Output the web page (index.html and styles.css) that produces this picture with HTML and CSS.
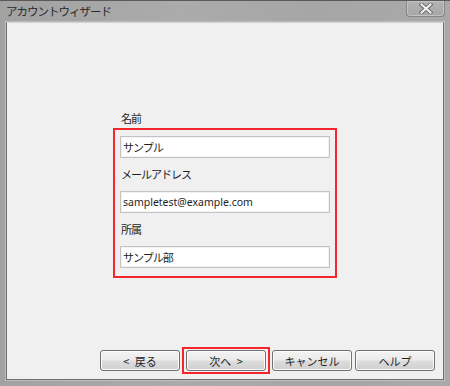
FILE: index.html
```html
<!DOCTYPE html>
<html>
<head>
  <meta charset="utf-8">
  <title>アカウントウィザード</title>
  <link rel="stylesheet" href="styles.css">
</head>
<body>
  <div class="window">
    <div class="titlebar">
      <span class="titlebar_text">アカウントウィザード</span>
      <span class="close-btn">
        <svg width="14" height="11" viewBox="0 0 14 11">
          <path d="M2.5 1.5 L11.5 9.5 M11.5 1.5 L2.5 9.5" stroke="#6b6b6b" stroke-width="4" stroke-linecap="square"/>
          <path d="M2.5 1.5 L11.5 9.5 M11.5 1.5 L2.5 9.5" stroke="#f4f4f4" stroke-width="2" stroke-linecap="square"/>
        </svg>
      </span>
    </div>
    <div class="client">
      <div class="form">
        <div class="label label-first">名前</div>
        <div class="field-box">
          <input class="field" type="text" value="サンプル">
          <div class="label">メールアドレス</div>
          <input class="field field-latin" type="text" value="sampletest@example.com">
          <div class="label">所属</div>
          <input class="field" type="text" value="サンプル部">
        </div>
      </div>
      <div class="buttons">
        <button class="btn">&lt; 戻る</button>
        <span class="btn-mark"><button class="btn">次へ &gt;</button></span>
        <button class="btn btn-cancel">キャンセル</button>
        <button class="btn btn-help">ヘルプ</button>
      </div>
    </div>
  </div>
</body>
</html>
```

FILE: styles.css
```css
html,
body {
  margin: 0;
  height: 100%;
  font-family: "Noto Sans CJK JP", "Noto Sans", sans-serif;
  font-size: 11px;
  color: #1e1e1e;
}

.window {
  height: 386px;
  display: flex;
  flex-direction: column;
  box-sizing: border-box;
  border-top: 1px solid #5a5a5a;
  background: linear-gradient(to right, #a2a2a2, #ababab 40%, #a6a6a6 70%, #a9a9a9);
}

.titlebar {
  height: 21px;
  display: flex;
  align-items: flex-start;
  justify-content: space-between;
}

.titlebar_text {
  padding: 2px 0 0 6px;
  font-size: 11.5px;
  letter-spacing: -1px;
  color: #2a2a2a;
  line-height: 17px;
}

.close-btn {
  width: 37px;
  height: 15px;
  margin-right: 5px;
  display: flex;
  align-items: center;
  justify-content: center;
  border: 1px solid #868686;
  border-top: none;
  border-radius: 0 0 4px 4px;
  background: linear-gradient(to bottom, #b4b4b4, #a6a6a6);
  box-shadow: inset 0 0 0 1px #c2c2c2;
}

.client {
  flex: 1;
  margin: 0 6px 6px 6px;
  display: flex;
  flex-direction: column;
  background: #f0f0f0;
  border: 1px solid #6f6f6f;
  border-top-color: #d0d0d0;
  box-shadow: 0 0 0 1px #bdbdbd;
}

.form {
  padding-top: 85px;
  display: flex;
  flex-direction: column;
  align-items: center;
}

.label {
  height: 33px;
  line-height: 33px;
  padding-left: 1px;
  letter-spacing: -1px;
}

.label-first {
  width: 216px;
  height: 20px;
  line-height: 20px;
  padding-left: 8px;
}

.field-box {
  width: 224px;
  box-sizing: border-box;
  padding: 6px 5px 8px 5px;
  border: 2px solid #f4262b;
  display: flex;
  flex-direction: column;
}

.field {
  height: 22px;
  box-sizing: border-box;
  margin: 0;
  padding: 0 2px;
  border: 1px solid #c3c3c3;
  box-shadow: inset 0 0 0 1px #f2f2f2;
  background: #fff;
  font-family: "Noto Sans CJK JP", sans-serif;
  font-size: 11px;
  letter-spacing: -1px;
  color: #1e1e1e;
  outline: none;
}

.field-latin {
  font-family: "Noto Sans", "Noto Sans CJK JP", sans-serif;
  font-size: 10.5px;
  letter-spacing: 0;
}

.buttons {
  margin-top: auto;
  padding: 0 8px 5px 0;
  display: flex;
  align-items: center;
  justify-content: flex-end;
}

.btn {
  width: 80px;
  height: 21px;
  margin: 0;
  padding: 0;
  border: 1px solid #707070;
  border-radius: 3px;
  background: linear-gradient(to bottom, #f3f3f3 0%, #ebebeb 48%, #dddddd 52%, #cfcfcf 100%);
  box-shadow: inset 0 0 0 1px #fbfbfb;
  font-family: "Noto Sans CJK JP", sans-serif;
  font-size: 11px;
  word-spacing: 3px;
  color: #1e1e1e;
}

.btn-mark {
  display: flex;
  margin-left: 2px;
  padding: 1px 2px;
  border: 2px solid #f4262b;
}

.btn-cancel {
  margin-left: 2px;
}

.btn-help {
  margin-left: 3px;
}
```
